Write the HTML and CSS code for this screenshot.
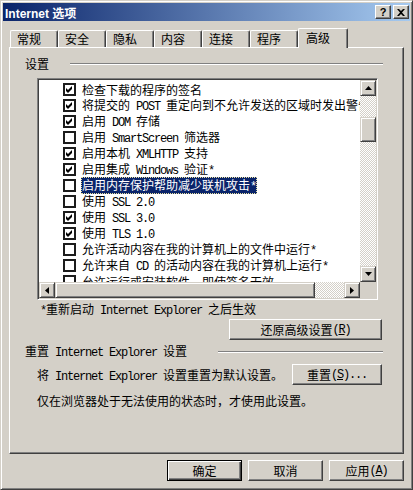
FILE: index.html
```html
<!DOCTYPE html>
<html lang="zh-CN">
<head>
  <meta charset="UTF-8">
  <title>Internet 选项</title>
  <link rel="stylesheet" href="styles.css">
</head>
<body>
<div class="window">
  <div class="titlebar">
    <span class="title">Internet 选项</span>
    <span class="tb-btn">?</span>
    <span class="tb-btn close"><svg width="8" height="7" viewBox="0 0 8 7"><path d="M0 0h2l2 2 2-2h2L5 3.5 8 7H6L4 5 2 7H0l3-3.5z" fill="#000"/></svg></span>
  </div>

  <div class="content">
    <div class="tabs">
      <div class="tab">常规</div>
      <div class="tab">安全</div>
      <div class="tab">隐私</div>
      <div class="tab">内容</div>
      <div class="tab">连接</div>
      <div class="tab">程序</div>
      <div class="tab active">高级</div>
    </div>

    <div class="page">
      <div class="head"><span>设置</span><i class="rule"></i></div>

      <div class="listbox">
        <div class="items">
          <div class="item"><b class="cb"><svg width="9" height="9" viewBox="0 0 9 9"><path d="M1 3L3 5 7 1V4L3 8 1 6Z"/></svg></b><span class="lbl">检查下载的程序的签名</span></div>
          <div class="item"><b class="cb"><svg width="9" height="9" viewBox="0 0 9 9"><path d="M1 3L3 5 7 1V4L3 8 1 6Z"/></svg></b><span class="lbl">将提交的<span class="en"> POST </span>重定向到不允许发送的区域时发出警告</span></div>
          <div class="item"><b class="cb"><svg width="9" height="9" viewBox="0 0 9 9"><path d="M1 3L3 5 7 1V4L3 8 1 6Z"/></svg></b><span class="lbl">启用<span class="en"> DOM </span>存储</span></div>
          <div class="item"><b class="cb"></b><span class="lbl">启用<span class="en"> SmartScreen </span>筛选器</span></div>
          <div class="item"><b class="cb"><svg width="9" height="9" viewBox="0 0 9 9"><path d="M1 3L3 5 7 1V4L3 8 1 6Z"/></svg></b><span class="lbl">启用本机<span class="en"> XMLHTTP </span>支持</span></div>
          <div class="item"><b class="cb"><svg width="9" height="9" viewBox="0 0 9 9"><path d="M1 3L3 5 7 1V4L3 8 1 6Z"/></svg></b><span class="lbl">启用集成<span class="en"> Windows </span>验证<span class="en">*</span></span></div>
          <div class="item"><b class="cb"></b><span class="lbl sel">启用内存保护帮助减少联机攻击<span class="en">*</span></span></div>
          <div class="item"><b class="cb"></b><span class="lbl">使用<span class="en"> SSL 2.0</span></span></div>
          <div class="item"><b class="cb"><svg width="9" height="9" viewBox="0 0 9 9"><path d="M1 3L3 5 7 1V4L3 8 1 6Z"/></svg></b><span class="lbl">使用<span class="en"> SSL 3.0</span></span></div>
          <div class="item"><b class="cb"><svg width="9" height="9" viewBox="0 0 9 9"><path d="M1 3L3 5 7 1V4L3 8 1 6Z"/></svg></b><span class="lbl">使用<span class="en"> TLS 1.0</span></span></div>
          <div class="item"><b class="cb"></b><span class="lbl">允许活动内容在我的计算机上的文件中运行<span class="en">*</span></span></div>
          <div class="item"><b class="cb"></b><span class="lbl">允许来自<span class="en"> CD </span>的活动内容在我的计算机上运行<span class="en">*</span></span></div>
          <div class="item"><b class="cb"></b><span class="lbl">允许运行或安装软件，即使签名无效</span></div>
        </div>
        <div class="vscroll">
          <span class="sb-btn"><svg width="7" height="4" viewBox="0 0 7 4"><path d="M0 4L3.5 0 7 4Z"/></svg></span>
          <span class="thumb v"></span>
          <span class="sb-btn down"><svg width="7" height="4" viewBox="0 0 7 4"><path d="M0 0L3.5 4 7 0Z"/></svg></span>
        </div>
        <div class="hscroll">
          <span class="sb-btn"><svg width="4" height="7" viewBox="0 0 4 7"><path d="M4 0L0 3.5 4 7Z"/></svg></span>
          <span class="thumb h"></span>
          <span class="sb-btn right"><svg width="4" height="7" viewBox="0 0 4 7"><path d="M0 0L4 3.5 0 7Z"/></svg></span>
        </div>
        <div class="corner"></div>
      </div>

      <div class="note"><span class="en">*</span>重新启动<span class="en"> Internet Explorer </span>之后生效</div>
      <button class="btn restore">还原高级设置<span class="en">(<u>R</u>)</span></button>

      <div class="head reset-head"><span>重置<span class="en"> Internet Explorer </span>设置</span><i class="rule short"></i></div>
      <div class="reset-row">
        <span>将<span class="en"> Internet Explorer </span>设置重置为默认设置。</span>
        <button class="btn reset">重置<span class="en">(<u>S</u>)...</span></button>
      </div>
      <div class="hint">仅在浏览器处于无法使用的状态时，才使用此设置。</div>
    </div>

    <div class="actions">
      <button class="btn default">确定</button>
      <button class="btn">取消</button>
      <button class="btn">应用<span class="en">(<u>A</u>)</span></button>
    </div>
  </div>
</div>
</body>
</html>
```

FILE: styles.css
```css
* { box-sizing: border-box; }
body { margin: 0; background: #d4d0c8; font-family: "Noto Sans CJK SC", sans-serif; font-size: 12px; color: #000; }
.en { font-family: "Liberation Mono", monospace; font-size: 12px; letter-spacing: -1.2px; }
u { text-decoration: underline; }

.window { width: 413px; height: 490px; padding: 2px; border: 1px solid; border-color: #d4d0c8 #404040 #404040 #d4d0c8; box-shadow: inset 1px 1px #fff, inset -1px -1px #808080; }

.titlebar { height: 18px; display: flex; align-items: center; padding-left: 2px; background: linear-gradient(to right, #0a246a, #a6caf0); color: #fff; font: bold 12px "Liberation Sans", "Noto Sans CJK SC", sans-serif; }
.title { flex: 1; }
.tb-btn { width: 16px; height: 14px; margin-left: 2px; display: flex; align-items: center; justify-content: center; background: #d4d0c8; color: #000; font: bold 11px "Liberation Sans", sans-serif; border: 1px solid; border-color: #fff #404040 #404040 #fff; box-shadow: inset -1px -1px #808080; }
.tb-btn.close { margin-right: 1px; }

.content { padding: 7px 6px 0; }

.tabs { height: 19px; display: flex; align-items: flex-end; padding-left: 1px; }
.tab { width: 48px; height: 17px; padding-left: 6px; display: flex; align-items: center; border: 1px solid; border-bottom: 0; border-color: #fff #404040 #fff #fff; border-radius: 2px 2px 0 0; box-shadow: inset -1px 0 #808080; line-height: 12px; }
.tab.active { width: 50px; height: 20px; padding-left: 7px; padding-bottom: 2px; margin-bottom: -1px; background: #d4d0c8; position: relative; z-index: 1; }

.page { height: 407px; padding: 0 20px 0 15px; border: 1px solid; border-color: #fff #404040 #404040 #fff; box-shadow: inset -1px -1px #808080; }

.head { height: 12px; margin-top: 10px; display: flex; align-items: center; line-height: 12px; white-space: nowrap; }
.rule { flex: 1; height: 2px; margin-left: 21px; border-top: 1px solid #808080; border-bottom: 1px solid #fff; }
.rule.short { flex: none; width: 165px; margin-left: auto; }
.reset-head { margin-top: 6px; }

.listbox { width: 341px; height: 222px; margin: 8px 0 0 12px; padding: 1px; background: #fff; border: 1px solid; border-color: #808080 #fff #fff #808080; box-shadow: inset 1px 1px #404040, inset -1px -1px #d4d0c8; display: grid; grid-template-columns: 1fr 16px; grid-template-rows: 1fr 16px; }
.items { overflow: hidden; padding-top: 1px; white-space: nowrap; }
.item { height: 16px; display: flex; align-items: center; padding-left: 24px; }
.cb { width: 13px; height: 13px; flex: none; padding: 0; border: 2px solid #1c1c1c; background: #fff; display: flex; }
.cb svg { fill: #000; }
.lbl { margin-left: 5px; padding: 1px 1px 0; line-height: 14px; }
.lbl.sel { background: #0a246a; color: #fff; outline: 1px dotted #e8e0a0; outline-offset: -1px; }

.vscroll, .hscroll { display: flex; background-color: #fff; background-image: repeating-conic-gradient(#d4d0c8 0 25%, #fff 0 50%); background-size: 2px 2px; }
.vscroll { flex-direction: column; }
.sb-btn, .thumb { flex: none; background: #d4d0c8; border: 1px solid; border-color: #d4d0c8 #404040 #404040 #d4d0c8; box-shadow: inset 1px 1px #fff, inset -1px -1px #808080; }
.sb-btn { width: 16px; height: 16px; display: flex; align-items: center; justify-content: center; }
.sb-btn svg { fill: #000; }
.sb-btn.down { margin-top: auto; }
.sb-btn.right { margin-left: auto; }
.thumb.v { width: 16px; height: 25px; margin-top: 21px; }
.thumb.h { width: 260px; height: 16px; }
.corner { background: #d4d0c8; }

.note { height: 12px; margin: 3px 0 0 15px; line-height: 12px; }

.btn { display: flex; align-items: center; justify-content: center; height: 21px; padding: 0; background: #d4d0c8; font-family: inherit; font-size: 12px; color: #000; border: 1px solid; border-color: #fff #404040 #404040 #fff; box-shadow: inset -1px -1px #808080; }
.btn.restore { width: 153px; margin: 4px 1px 0 auto; }

.reset-row { height: 21px; margin-top: 6px; padding-left: 12px; display: flex; align-items: center; white-space: nowrap; }
.btn.reset { width: 90px; margin: 0 1px 0 auto; }

.hint { height: 12px; margin-top: 10px; padding-left: 12px; line-height: 12px; }

.actions { margin-top: 6px; display: flex; justify-content: flex-end; gap: 6px; }
.actions .btn { width: 75px; }
.btn.default { border-color: #000; box-shadow: inset 1px 1px #fff, inset -1px -1px #404040, inset -2px -2px #808080; }
```
